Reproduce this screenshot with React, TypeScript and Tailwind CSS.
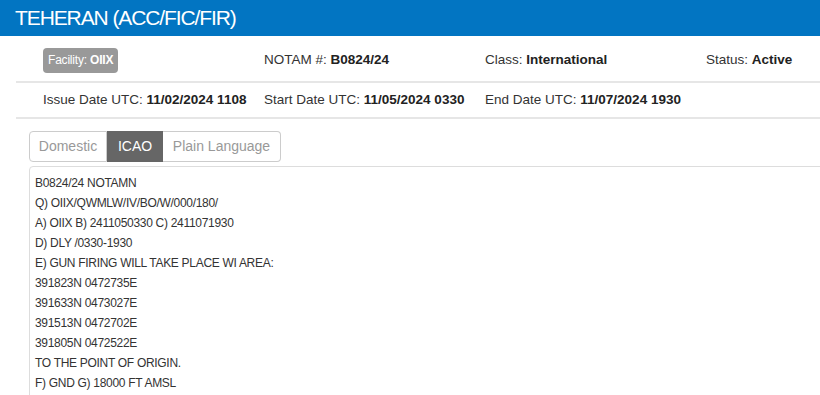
import React from "react";

const lines = [
  "B0824/24 NOTAMN",
  "Q) OIIX/QWMLW/IV/BO/W/000/180/",
  "A) OIIX B) 2411050330 C) 2411071930",
  "D) DLY /0330-1930",
  "E) GUN FIRING WILL TAKE PLACE WI AREA:",
  "391823N 0472735E",
  "391633N 0473027E",
  "391513N 0472702E",
  "391805N 0472522E",
  "TO THE POINT OF ORIGIN.",
  "F) GND G) 18000 FT AMSL",
];

function Field({ label, value }: { label: string; value: string }) {
  return (
    <div className="w-[221px] shrink-0 text-[13.5px] text-[#333]">
      {label} <span className="font-bold text-[#222]">{value}</span>
    </div>
  );
}

export default function App() {
  return (
    <div
      className="w-[820px] h-[395px] overflow-hidden bg-white"
      style={{ fontFamily: '"Liberation Sans", Arial, sans-serif' }}
    >
      <div className="h-[36px] bg-[#0275c2] pl-[15px] flex items-center pb-[2px]">
        <h1 className="text-[21px] tracking-[-1.1px] text-white leading-none">TEHERAN (ACC/FIC/FIR)</h1>
      </div>
      <div className="pl-[16px]">
        <div className="h-[47px] border-b-2 border-[#e6e6e6] flex items-center pl-[27px] pt-[3px] w-[900px]">
          <div className="w-[221px] shrink-0">
            <span className="inline-flex items-center h-[25px] px-[5px] rounded-[4px] bg-[#999] text-white text-[12px] tracking-[-0.2px]">
              Facility:&nbsp;<span className="font-bold">OIIX</span>
            </span>
          </div>
          <Field label="NOTAM #:" value="B0824/24" />
          <Field label="Class:" value="International" />
          <Field label="Status:" value="Active" />
        </div>
        <div className="h-[36px] border-b-2 border-[#e6e6e6] flex items-center pl-[27px] w-[900px]">
          <Field label="Issue Date UTC:" value="11/02/2024 1108" />
          <Field label="Start Date UTC:" value="11/05/2024 0330" />
          <Field label="End Date UTC:" value="11/07/2024 1930" />
        </div>
      </div>
      <div className="pl-[29px] pt-[12px]">
        <div className="flex h-[31px] text-[14px]">
          <div className="w-[78px] flex items-center justify-center border border-[#ccc] rounded-l-[4px] text-[#999]">
            Domestic
          </div>
          <div className="w-[56px] flex items-center justify-center bg-[#666] border border-[#666] text-white">
            ICAO
          </div>
          <div className="w-[118px] flex items-center justify-center border border-[#ccc] border-l-0 rounded-r-[4px] text-[#999]">
            Plain Language
          </div>
        </div>
        <div className="mt-[4px] w-[900px] border border-[#ddd] rounded-[4px] pl-[5px] pt-[6px] pb-[10px] text-[12px] tracking-[-0.3px] leading-[20px] text-[#333]">
          {lines.map((l, i) => (
            <div key={i}>{l}</div>
          ))}
        </div>
      </div>
    </div>
  );
}
